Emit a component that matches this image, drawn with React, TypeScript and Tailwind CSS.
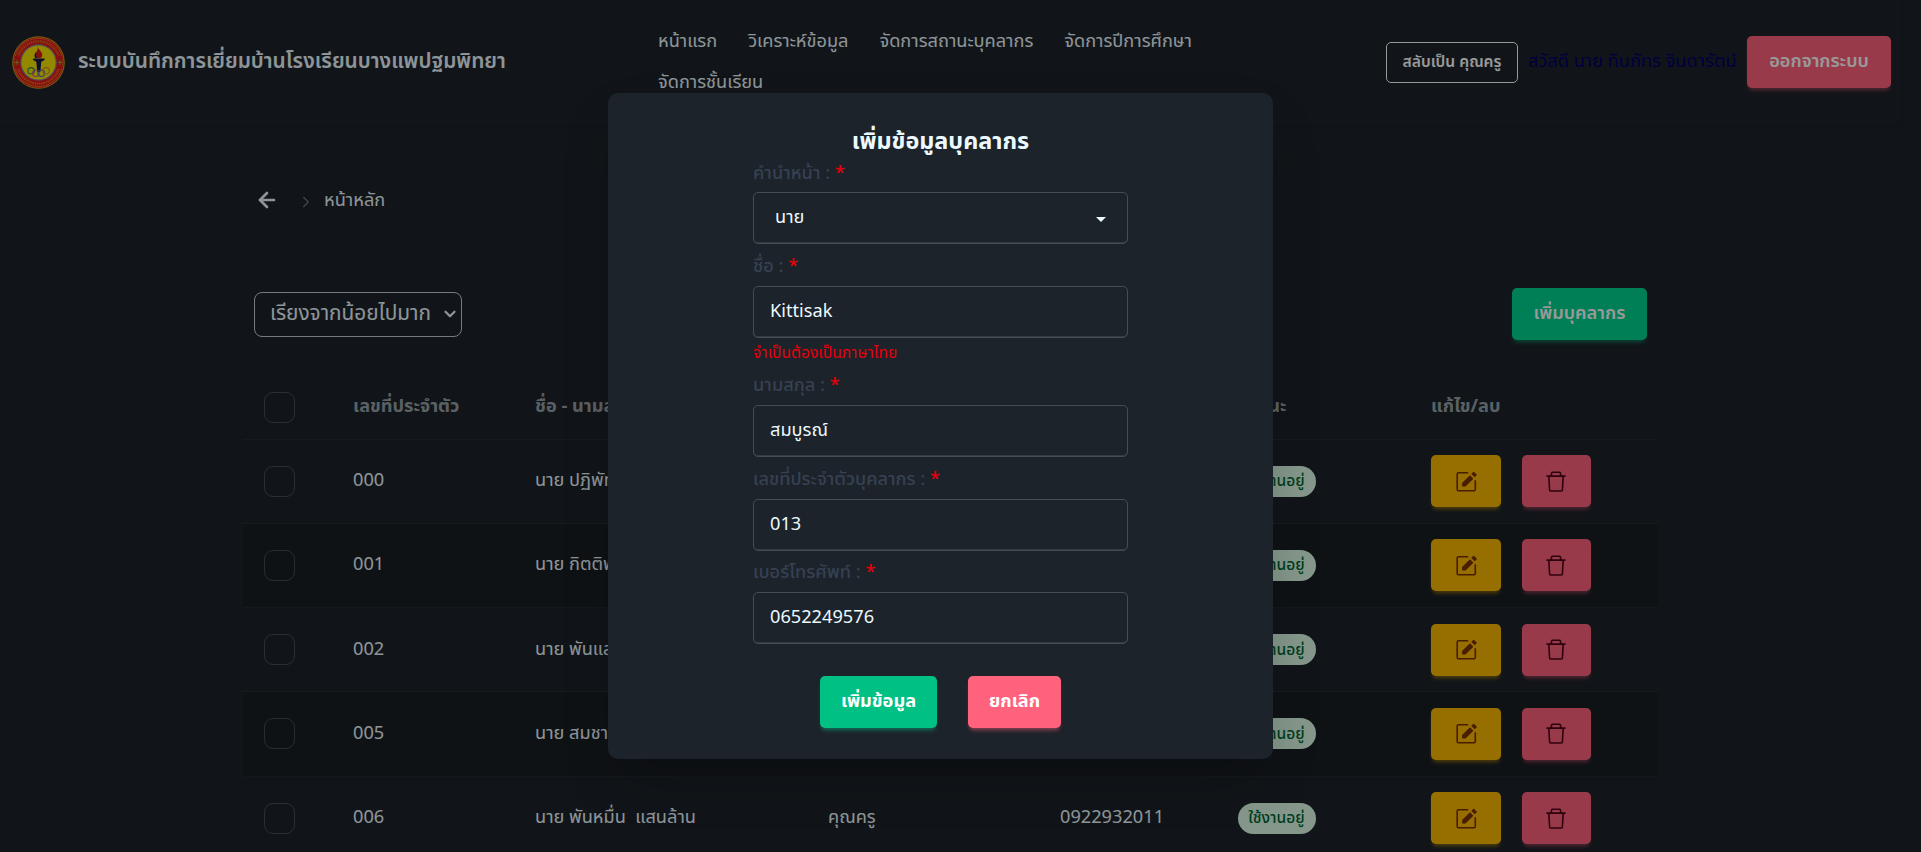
import React from "react";
import { ArrowLeft, ChevronDown, ChevronRight } from "lucide-react";

type Person = { id: string; name: string; role?: string; phone?: string };

const people: Person[] = [
  { id: "000", name: "นาย ปฏิพัทธ์" },
  { id: "001", name: "นาย กิตติพงษ์" },
  { id: "002", name: "นาย พันแสน" },
  { id: "005", name: "นาย สมชาย" },
  { id: "006", name: "นาย พันหมื่น  แสนล้าน", role: "คุณครู", phone: "0922932011" },
];

const navItems = ["หน้าแรก", "วิเคราะห์ข้อมูล", "จัดการสถานะบุคลากร", "จัดการปีการศึกษา", "จัดการชั้นเรียน"];

const columns = "grid grid-cols-[110px_182px_293px_232px_178px_193px_1fr] items-center w-[1415px]";

function Logo() {
  return (
    <svg viewBox="0 0 54 54" className="size-[53px] shrink-0">
      <circle cx="27" cy="27" r="26.8" fill="#c9a018" />
      <circle cx="27" cy="27" r="25.8" fill="#e01c1c" />
      <circle cx="27" cy="27" r="24.6" fill="none" stroke="#e8a020" strokeWidth="0.6" />
      <circle cx="27" cy="27" r="18.6" fill="#8a7f9c" />
      <circle cx="27" cy="27" r="17.4" fill="#f5e400" />
      <circle cx="27" cy="27" r="21.6" fill="none" stroke="#f0a020" strokeWidth="2.4" strokeDasharray="1.3 1" opacity="0.6" pathLength="136" />
      <path d="M2.6 27h5M46.4 27h5" stroke="#e01c1c" strokeWidth="13" />
      <path d="M2.8 27h4.400M5 24.600v4.800M46.800 27h4.400M49 24.600v4.800" stroke="#a0a830" strokeWidth="1" />
      <path d="M26.200 11c.6 3.200 4.800 5 4.600 8.300 0 1.600-.8 2.600-1.600 3.200h-5c-1.600-1.600-1-3.600.2-5.400 1.200-1.900 2-3.500 1.800-6.100z" fill="#e01c1c" />
      <path d="M24.600 16c-1.600 2-2.400 4.500-.8 6.500h2c-1.600-2-1.400-4.300-1.200-6.500z" fill="#20205c" />
      <path d="M21.500 22.800h11.600v1.600l-3.300 1.800-.9 10.600h-3.200l-.9-10.600-3.300-1.800z" fill="#16164a" />
      <g fill="none" strokeWidth="1.100">
        <circle cx="19.500" cy="35.500" r="3.300" stroke="#2c8a3c" />
        <circle cx="24.300" cy="38" r="3.300" stroke="#c84a9c" />
        <circle cx="29.800" cy="38" r="3.300" stroke="#4a5cb0" />
        <circle cx="34.800" cy="35.500" r="3.300" stroke="#d88a20" />
      </g>
    </svg>
  );
}

function EditIcon() {
  return (
    <svg viewBox="0 0 21 21" className="size-[21px]" fill="none">
      <path d="M12.200 1.700H2.400a1.200 1.200 0 0 0-1.200 1.200v15.700a1.200 1.200 0 0 0 1.200 1.200h15.700a1.200 1.200 0 0 0 1.200-1.200V9.200" stroke="currentColor" strokeWidth="1.600" />
      <path d="M6.100 15.600v-3.500l7.900-7.900 3.400 3.500-7.900 7.900z" fill="currentColor" />
      <path d="M15.300 2.900l1.900-1.900a.7.7 0 0 1 1 0l2.400 2.400a.7.7 0 0 1 0 1l-1.900 1.900z" fill="currentColor" />
    </svg>
  );
}

function TrashIcon() {
  return (
    <svg viewBox="0 0 20 21" className="mr-px h-[21px] w-5" fill="none" stroke="currentColor" strokeWidth="1.600">
      <path d="M.4 5.100h19.200M5.100 5l.5-3a1 1 0 0 1 1-.8h6.800a1 1 0 0 1 1 .8l.5 3M2.800 5.100l.8 13.900a1 1 0 0 0 1 1h10.800a1 1 0 0 0 1-1l.8-13.900" />
    </svg>
  );
}

function Checkbox() {
  return <div className="ml-[21px] size-[31px] rounded-[9px] border border-[#ecf9ff]/20" />;
}

function Label({ text }: { text: string }) {
  return (
    <div className="mb-[5px] h-[28px] leading-[28px] font-medium text-[#364153]">
      {text} : <span className="text-[#e7000b]">*</span>
    </div>
  );
}

function Field({ label, value, className, error }: { label: string; value: string; className?: string; error?: string }) {
  return (
    <div className={className}>
      <Label text={label} />
      <div className="flex h-[52px] items-center rounded-[5px] border border-[#464c53] px-4 shadow-[inset_0_-1px_0_#343b42]">{value}</div>
      {error && <p className="mt-px h-[28px] text-[15.6px] leading-[28px] text-[#e7000b]">{error}</p>}
    </div>
  );
}

export default function App() {
  return (
    <div className="relative h-[852px] w-full overflow-hidden bg-[#1d232a] font-['Noto_Sans_Thai','Noto_Sans',sans-serif] text-[18.2px] leading-[28px] text-[#ecf9ff]">
      <header className="flex h-[126px] w-[1901px] items-center pb-[2px] shadow-sm">
        <div className="flex w-[658px] items-center gap-[13px] pl-3">
          <Logo />
          <span className="text-[20.8px] font-semibold whitespace-nowrap">ระบบบันทึกการเยี่ยมบ้านโรงเรียนบางแพปฐมพิทยา</span>
        </div>
        <nav className="flex w-[560px] flex-wrap gap-x-[31px] pb-px">
          {navItems.map((item) => (
            <a key={item} className="h-[41px] leading-[41px] whitespace-nowrap">
              {item}
            </a>
          ))}
        </nav>
        <div className="ml-auto flex items-center gap-[11px] pr-[10px]">
          <button className="h-[41px] w-[132px] rounded-[5px] border border-white text-[15.6px] font-semibold whitespace-nowrap text-white">สลับเป็น คุณครู</button>
          <span className="-ml-px w-[208px] pb-px whitespace-nowrap text-[#000068]">สวัสดี นาย ทินภัทร จินดารัตน์</span>
          <button className="h-[52px] w-[144px] rounded-[5px] bg-[#ff627d] font-semibold whitespace-nowrap text-white shadow-[0_4px_4px_-2px_#ff627d80]">ออกจากระบบ</button>
        </div>
      </header>

      <div className="flex h-[148px] items-center pl-[255px]">
        <ArrowLeft className="size-6" strokeWidth={2.700} />
        <ChevronRight className="mt-1 ml-[18px] size-[18px] opacity-40" strokeWidth={1.600} />
        <span className="ml-[9px] pt-px">หน้าหลัก</span>
      </div>

      <main className="ml-[243px] w-[1415px]">
        <div className="mt-[14px] flex h-[52px] items-center justify-between pr-[11px] pl-[11px]">
          <div className="flex h-[45px] w-[208px] items-center justify-between rounded-lg border border-[#ecf9ff]/80 pr-[2px] pl-[15px] text-[20.8px]">
            <span className="whitespace-nowrap">เรียงจากน้อยไปมาก</span>
            <ChevronDown className="size-[18px]" strokeWidth={3} />
          </div>
          <button className="h-[52px] w-[135px] rounded-[5px] bg-[#00d390] font-semibold whitespace-nowrap text-white shadow-[0_4px_4px_-2px_#00d39080]">เพิ่มบุคลากร</button>
        </div>

        <div className="mt-[35.500px]">
          <div className={columns + " h-16 border-b border-[#ecf9ff]/5 font-bold text-[#ecf9ff]/60"}>
            <Checkbox />
            <span>เลขที่ประจำตัว</span>
            <span>ชื่อ - นามสกุล</span>
            <span />
            <span />
            <span>สถานะ</span>
            <span>แก้ไข/ลบ</span>
          </div>
          {people.map((p) => (
            <div key={p.id} className={columns + " h-[84.25px] border-b border-[#ecf9ff]/5 even:bg-[#1d232a] odd:bg-[#191e24]"}>
              <Checkbox />
              <span>{p.id}</span>
              <span className="whitespace-pre">{p.name}</span>
              <span>{p.role}</span>
              <span>{p.phone}</span>
              <span className="flex h-[31px] w-[78px] items-center justify-center rounded-full bg-[#dcfce7] pr-px text-[15.6px] font-medium whitespace-nowrap text-[#016630]">ใช้งานอยู่</span>
              <span className="flex gap-[21px]">
                <button className="flex h-[52px] w-[70px] items-center justify-center rounded-[5px] bg-[#fcb700] text-[#793205] shadow-[0_4px_4px_-2px_#fcb70080]">
                  <EditIcon />
                </button>
                <button className="flex h-[52px] w-[69px] items-center justify-center rounded-[5px] bg-[#ff627d] text-[#4d0218] shadow-[0_4px_4px_-2px_#ff627d80]">
                  <TrashIcon />
                </button>
              </span>
            </div>
          ))}
        </div>
      </main>

      <div className="absolute inset-0 flex items-center justify-center bg-black/40 pr-10">
        <div className="flex h-[666px] w-[665px] flex-col items-center rounded-[10px] bg-[#1d232a] pt-[32px] shadow-[0_25px_50px_-12px_rgba(0,0,0,0.25)]">
          <h3 className="h-[35px] text-[23.4px] leading-[35px] font-bold">เพิ่มข้อมูลบุคลากร</h3>
          <form className="w-[375px]">
            <div className="-mb-px">
              <Label text="คำนำหน้า" />
            </div>
            <div className="flex h-[52px] items-center justify-between rounded-[5px] border border-[#464c53] pr-[21px] pl-[21px] shadow-[inset_0_-1px_0_#343b42]">
              <span>นาย</span>
              <svg viewBox="0 0 10 5" className="mt-[3px] h-[5px] w-[10px]" fill="currentColor">
                <path d="M0 0h10L5 5z" />
              </svg>
            </div>
            <Field className="mt-[9px]" label="ชื่อ" value="Kittisak" error="จำเป็นต้องเป็นภาษาไทย" />
            <Field className="mt-[5px]" label="นามสกุล" value="สมบูรณ์" />
            <Field className="mt-[9px]" label="เลขที่ประจำตัวบุคลากร" value="013" />
            <Field className="mt-[8px]" label="เบอร์โทรศัพท์" value="0652249576" />
          </form>
          <div className="mt-8 flex gap-[31px]">
            <button className="h-[52px] w-[117px] rounded-[5px] bg-[#00c083] font-bold whitespace-nowrap text-white shadow-[0_4px_4px_-2px_#00c08380]">เพิ่มข้อมูล</button>
            <button className="h-[52px] w-[93px] rounded-[5px] bg-[#ff627d] font-bold whitespace-nowrap text-white shadow-[0_4px_4px_-2px_#ff627d80]">ยกเลิก</button>
          </div>
        </div>
      </div>
    </div>
  );
}
